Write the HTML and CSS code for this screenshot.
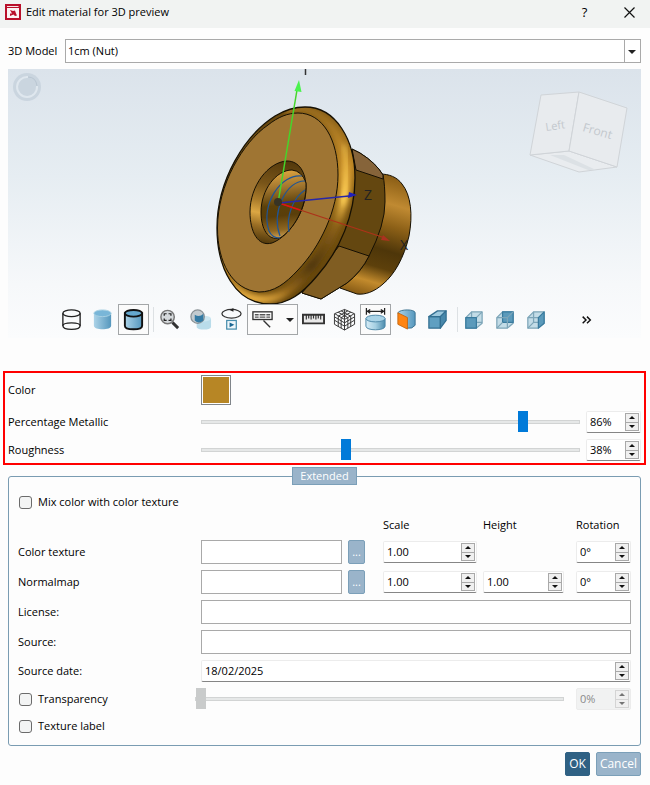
FILE: index.html
```html
<!DOCTYPE html>
<html lang="en">
<head>
<meta charset="utf-8">
<meta name="viewport" content="width=device-width, initial-scale=1">
<title>Edit material for 3D preview</title>
<link rel="stylesheet" href="styles.css">
</head>
<body>
<main class="dialog">
  <header class="titlebar">
    <svg class="app-icon" viewBox="0 0 16 16" aria-hidden="true">
      <rect width="16" height="16" fill="#b9102a"/>
      <path d="M2 2.500h11.500" stroke="#f6e4e4"/>
      <rect x="2" y="4" width="12" height="10" fill="#fbf3f3"/>
      <path d="M5 6l3 1 2-.5 1 3 1 2-2 .5-1.500-1.500L5 12V9.500h2z" fill="#b9102a"/>
    </svg>
    <h1 class="title">Edit material for 3D preview</h1>
    <button class="title-button" type="button" aria-label="Help">?</button>
    <button class="title-button" type="button" aria-label="Close">
      <svg width="11" height="11" viewBox="0 0 11 11"><path d="M.5.5l10 10M10.500.5l-10 10" stroke="#111" stroke-width="1.200"/></svg>
    </button>
  </header>

  <form class="content">
    <div class="model-row">
      <label for="model">3D Model</label>
      <div class="combo">
        <select id="model"><option>1cm (Nut)</option></select>
      </div>
    </div>

    <section class="viewport" aria-label="3D preview">
      <svg class="scene" viewBox="8 69 633 269" role="img" aria-label="Nut model">
        <defs>
          <linearGradient id="rim" gradientUnits="userSpaceOnUse" x1="217" y1="120" x2="355" y2="290">
            <stop offset="0" stop-color="#4d3405"/><stop offset=".35" stop-color="#8a6019"/><stop offset=".55" stop-color="#b98322"/><stop offset=".7" stop-color="#7c5612"/><stop offset="1" stop-color="#4d3405"/>
          </linearGradient>
          <linearGradient id="glow" gradientUnits="userSpaceOnUse" x1="320" y1="110" x2="262" y2="304">
            <stop offset="0" stop-color="#94681c"/><stop offset=".2" stop-color="#cf942c"/><stop offset=".38" stop-color="#fcc74e"/><stop offset=".52" stop-color="#8f6318"/><stop offset=".75" stop-color="#50370a"/><stop offset=".9" stop-color="#94661a"/><stop offset="1" stop-color="#f0b544"/>
          </linearGradient>
          <linearGradient id="barrel" gradientUnits="userSpaceOnUse" x1="396" y1="178" x2="362" y2="294">
            <stop offset="0" stop-color="#8b5e16"/><stop offset=".12" stop-color="#a87624"/><stop offset=".22" stop-color="#c08a32"/><stop offset=".4" stop-color="#8c6017"/><stop offset=".6" stop-color="#4e3609"/><stop offset=".75" stop-color="#5d400b"/><stop offset=".88" stop-color="#c38b2d"/><stop offset="1" stop-color="#8b5e16"/>
          </linearGradient>
          <linearGradient id="chamfer" gradientUnits="userSpaceOnUse" x1="282" y1="161" x2="266" y2="244">
            <stop offset="0" stop-color="#553a0c"/><stop offset=".3" stop-color="#795519"/><stop offset=".5" stop-color="#a87a2a"/><stop offset=".65" stop-color="#dca743"/><stop offset=".8" stop-color="#9a6e24"/><stop offset="1" stop-color="#4f370b"/>
          </linearGradient>
          <linearGradient id="bore" gradientUnits="userSpaceOnUse" x1="278" y1="170" x2="286" y2="240">
            <stop offset="0" stop-color="#e0a63f"/><stop offset=".25" stop-color="#a2762f"/><stop offset=".5" stop-color="#5b4009"/><stop offset=".65" stop-color="#5a3e0a"/><stop offset=".85" stop-color="#8f6722"/><stop offset="1" stop-color="#e2b465"/>
          </linearGradient>
          <filter id="soft" x="-20%" y="-20%" width="140%" height="140%"><feGaussianBlur stdDeviation="2.500"/></filter>
          <clipPath id="flange"><path d="M305 107C336 107 355 140 355 178C355 215 340 250 317 276C302 294 288 304 270 304C235 304 217 268 217 228C217 180 245 135 275 116C285 110 295 107 305 107Z"/></clipPath>
        </defs>

        <g class="badge">
          <circle cx="27" cy="87" r="14" fill="#cad5df"/>
          <path d="M28 77a10 10 0 1 0 9 9" fill="none" stroke="#dfe7ee" stroke-width="2"/>
          <path d="M28 77q8 0 9 9" fill="none" stroke="#b9c6d2"/>
        </g>

        <g stroke="#161003" stroke-linejoin="round">
          <path d="M380 174C389 174 397 177 402 184C411 195 413 215 409 236C404 258 394 275 383 284C374 292 365 295 357 294L340 288Z" fill="url(#barrel)"/>
          <path d="M352 149L360 153Q376 163 383 175Q385 185 385 202Q385 225 369 256Q361 272 347 283L321 299L302 293L320 180Z" fill="#644710"/>
          <path d="M352 149L360 153Q376 163 383 175V179L356 170Z" fill="#86643a"/>
          <path d="M339 246L369 256Q361 272 347 283L321 299L302 293Z" fill="#805d22"/>
        </g>
        <g clip-path="url(#flange)">
          <rect x="210" y="100" width="150" height="210" fill="url(#rim)"/>
          <path d="M285 110C318 101 346 130 346 176C346 214 328 248 305 274C287 295 273 300 258 299Q240 297 224 276" fill="none" stroke="url(#glow)" stroke-width="9" filter="url(#soft)"/>
          <path d="M344 145Q350 170 342 205" fill="none" stroke="#ffd85d" stroke-width="2" filter="url(#soft)"/>
        </g>
        <path d="M305 107C336 107 355 140 355 178C355 215 340 250 317 276C302 294 288 304 270 304C235 304 217 268 217 228C217 180 245 135 275 116C285 110 295 107 305 107Z" fill="none" stroke="#161003" stroke-width="1.300"/>
        <path d="M298 113C323 113 338 140 338 175C338 210 320 247 298 270C285 284 274 292 259 292C232 290 217.500 262 217.500 228C217.500 185 243 142 268 125C278 117 288 113 298 113Z" fill="#9f7533" stroke="#161003"/>
        <path d="M287 161C299 161 306 172 306 188C306 213 288 237 272 243C258 247 250 232 250 212C250 186 268 162 287 161Z" fill="url(#chamfer)" stroke="#161003"/>
        <path d="M292 170Q302 171 306 183C307 208 293 230 280 238C268 241 261 229 261 212C261 190 276 170 292 170Z" fill="url(#bore)" stroke="#161003"/>
        <g fill="none" stroke="#1f5596" stroke-width="1.200">
          <path d="M302 176C281 173 260 205 269 231Q272 238 280 238"/>
          <path d="M305 181C287 180 271 211 280 236"/>
          <path d="M305 190C293 198 286 216 289 232"/>
        </g>
        <path d="M278 203L297 90" stroke="#46d52b" stroke-width="1.500"/>
        <path d="M299 80l2.500 12-7-1z" fill="#4af34d"/>
        <path d="M279 203L385 238" stroke="#ad3219" stroke-width="1.300"/>
        <path d="M279 203L300 210" stroke="#e01313" stroke-width="1.500"/>
        <path d="M390 241l-9-1 2-5z" fill="#ab3220"/>
        <path d="M279 203L349 196" stroke="#2727a8" stroke-width="1.500"/>
        <path d="M357 195l-8-3-1 6z" fill="#2020bb"/>
        <circle cx="278" cy="202" r="4" fill="#373324"/>
        <path d="M305.500 69v6" stroke="#333" stroke-width="1.500"/>
        <text class="axis" x="364" y="200">Z</text>
        <text class="axis" x="400" y="250">X</text>

        <g stroke="#d0d4d8" stroke-linejoin="round">
          <path d="M530 155L569 151L617 167L579 172Z" fill="#e9ecef"/>
          <path d="M541 95L579 92L569 151L530 155Z" fill="#e8ebee"/>
          <path d="M579 92L627 108L617 167L569 151Z" fill="#e8ebee"/>
          <path d="M550 155l38 15h8l-32-15z" fill="#dce1e5" stroke="none"/>
        </g>
        <text class="cube-left" transform="translate(546 131) rotate(-8)">Left</text>
        <text class="cube-front" transform="translate(582 131) rotate(16)">Front</text>
      </svg>

      <div class="toolbar" role="toolbar" aria-label="View tools">
        <svg class="defs" width="0" height="0" aria-hidden="true">
          <defs>
            <linearGradient id="blue"><stop offset="0" stop-color="#acd3e8"/><stop offset="1" stop-color="#5597bd"/></linearGradient>
            <linearGradient id="pale"><stop offset="0" stop-color="#d7edf7"/><stop offset=".5" stop-color="#a5cfe2"/><stop offset="1" stop-color="#4c8cad"/></linearGradient>
          </defs>
        </svg>
        <button class="tool" type="button" aria-label="Wireframe"><svg viewBox="0 0 24 24"><g fill="none" stroke="#222" stroke-width="1.400"><ellipse cx="12" cy="5.500" rx="9" ry="3.500"/><path d="M3 5.500v13c0 5 18 5 18 0v-13"/><path d="M3 18.500c0-4 18-4 18 0"/></g></svg></button>
        <button class="tool" type="button" aria-label="Shaded"><svg viewBox="0 0 24 24"><path d="M3 5.500v13c0 5 18 5 18 0v-13z" fill="url(#blue)"/><ellipse cx="12" cy="5.500" rx="9" ry="3.500" fill="#79b6d8" stroke="#a9d1e3"/></svg></button>
        <button class="tool active" type="button" aria-label="Shaded with edges"><svg viewBox="0 0 24 24"><path d="M3 5.500v13c0 5 18 5 18 0v-13z" fill="url(#blue)" stroke="#111" stroke-width="2"/><ellipse cx="12" cy="5.500" rx="9" ry="3.500" fill="#65a8ce" stroke="#111" stroke-width="2"/></svg></button>
        <span class="divider"></span>
        <button class="tool" type="button" aria-label="Zoom to fit"><svg viewBox="0 0 24 24"><path d="M15 15l6 6" stroke="#333" stroke-width="3"/><circle cx="10" cy="9.500" r="7" fill="#d5d9dc" stroke="#777" stroke-width="1.500"/><path d="M6.500 8V6H9M11 6h2.500v2M13.500 11v2H11M9 13H6.500v-2" fill="none" stroke="#222" stroke-width="1.300"/></svg></button>
        <button class="tool" type="button" aria-label="Transparent view"><svg viewBox="0 0 24 24"><path d="M8 11v8.500c0 4 15 4 15 0V11z" fill="#b9dcea"/><ellipse cx="15.500" cy="11" rx="7.500" ry="3" fill="#cde7f1"/><circle cx="9" cy="9" r="7" fill="#c3cbcf" stroke="#8a9296" stroke-width="1.300"/><path d="M6 7q5 3 9-1v7q-5 4-9 0z" fill="#347ba4"/></svg></button>
        <button class="tool" type="button" aria-label="Rotate animation"><svg viewBox="0 0 24 24"><ellipse cx="12" cy="6" rx="10" ry="4.500" fill="none" stroke="#333" stroke-width="1.300"/><path d="M14 0l-4 2 4 2" fill="#222"/><rect x="7" y="13" width="10" height="9" fill="#eef6fa" stroke="#488ead" stroke-width="1.300"/><path d="M10 15l5 2.500-5 2.500z" fill="#1b6793"/></svg></button>
        <button class="tool split active" type="button" aria-label="Labels"><svg viewBox="0 0 24 24"><rect x="2" y="4" width="20" height="8" fill="#fff" stroke="#333" stroke-width="1.400"/><path d="M4 7h4M9 7h6M16 7h4M4 9.500h4M9 9.500h6M16 9.500h4" stroke="#555" stroke-width="1.500"/><path d="M13 13l7 7" stroke="#333" stroke-width="1.400"/></svg><span class="caret"></span></button>
        <button class="tool" type="button" aria-label="Measure"><svg viewBox="0 0 24 24"><path d="M1 7h22v9H1z" fill="#e8e8e8" stroke="#333" stroke-width="2"/><path d="M4.500 7v5M7 7v4M9.500 7v5M12 7v4M14.500 7v5M17 7v4M19.500 7v5" stroke="#333" stroke-width="1.200"/></svg></button>
        <button class="tool" type="button" aria-label="Mesh"><svg viewBox="0 0 24 24"><g fill="none" stroke="#333"><path d="M12 1.500L22.500 6v11L12 23 1.500 17V6z"/><path d="M2 6l10 6 10-6M12 12v11M5.500 4.500l10 5.500v11M8.500 3l10 5.500v11M18.500 4.500l-10 5.500v11M15.500 3l-10 5.500v11M2 9.500l10 6 10-6M2 13l10 6 10-6M12 1.500v10"/></g></svg></button>
        <button class="tool active" type="button" aria-label="Dimensions"><svg viewBox="0 0 24 24"><path d="M2.500 0v7M21.500 0v7M3 3.500h18M6.500 1.500l-3 2 3 2M17.500 1.500l3 2-3 2" fill="none" stroke="#222" stroke-width="1.300"/><path d="M2 11v8c0 5 20 5 20 0v-8z" fill="url(#pale)" stroke="#4c87a7"/><ellipse cx="12" cy="11" rx="10" ry="3.500" fill="#a9d3e7" stroke="#4c87a7"/></svg></button>
        <button class="tool" type="button" aria-label="Section view"><svg viewBox="0 0 24 24"><path d="M3 5c2-4 18-4 18 0v13q-3 4-8 3z" fill="url(#blue)" stroke="#39718f"/><path d="M3 5l10 5v12L3 17z" fill="#ff8411" stroke="#c66a15"/></svg></button>
        <button class="tool" type="button" aria-label="Isometric view"><svg viewBox="0 0 24 24"><g stroke="#326f91" stroke-width="1.300" stroke-linejoin="round"><path d="M3 9h12v12H3z" fill="#5f9fc1"/><path d="M3 9l9-6h9l-6 6z" fill="#9dc9de"/><path d="M15 9l6-6v10l-6 8z" fill="#4888ab"/></g></svg></button>
        <span class="divider"></span>
        <button class="tool" type="button" aria-label="Front view"><svg viewBox="0 0 24 24"><g stroke="#7da5b8" stroke-width="1.300" stroke-linejoin="round"><path d="M4 10l6-6h11v12l-6 5H4z" fill="#c3dce7"/><path d="M10 4v11h11M10 15l-6 6M15 10l6-6" fill="none"/><path d="M4 10h11v11H4z" fill="#5b9abb" stroke="#397b9e"/></g></svg></button>
        <button class="tool" type="button" aria-label="Back view"><svg viewBox="0 0 24 24"><g stroke="#7da5b8" stroke-width="1.300" stroke-linejoin="round"><path d="M4 10l6-6h11v12l-6 5H4z" fill="#c3dce7"/><path d="M10 4h11v11H10z" fill="#5b9abb" stroke="#397b9e"/><path d="M4 10h11v11M4 21l6-6M15 10l6-6" fill="none"/></g></svg></button>
        <button class="tool" type="button" aria-label="Right view"><svg viewBox="0 0 24 24"><g stroke="#7da5b8" stroke-width="1.300" stroke-linejoin="round"><path d="M4 10l6-6h11v12l-6 5H4z" fill="#c3dce7"/><path d="M4 10h11M10 4v11h11M10 15l-6 6" fill="none"/><path d="M15 10l6-6v12l-6 5z" fill="#5b9abb" stroke="#397b9e"/></g></svg></button>
        <button class="tool more" type="button" aria-label="More tools"><svg viewBox="0 0 24 24"><path d="M8 9l3.500 3.500L8 16M12.500 9l3.500 3.500-3.500 3.500" fill="none" stroke="#111" stroke-width="1.500"/></svg></button>
      </div>
    </section>

    <section class="surface" aria-label="Surface">
      <label for="color">Color</label>
      <button class="swatch" id="color" type="button" aria-label="Choose color"></button>

      <label class="row-start" for="metallic">Percentage Metallic</label>
      <input class="slider" id="metallic" type="range" min="0" max="100" value="86">
      <div class="spin"><input type="text" value="86%" aria-label="Metallic value"><span class="steps"><button type="button" aria-label="Increase"></button><button type="button" aria-label="Decrease"></button></span></div>

      <label class="row-start" for="roughness">Roughness</label>
      <input class="slider" id="roughness" type="range" min="0" max="100" value="38">
      <div class="spin"><input type="text" value="38%" aria-label="Roughness value"><span class="steps"><button type="button" aria-label="Increase"></button><button type="button" aria-label="Decrease"></button></span></div>
    </section>

    <fieldset class="extended">
      <legend><button class="extended-toggle" type="button">Extended</button></legend>
      <label class="check"><input type="checkbox">Mix color with color texture</label>

      <div class="maps">
        <span class="head head-scale">Scale</span>
        <span class="head head-height">Height</span>
        <span class="head head-rotation">Rotation</span>

        <label class="row-start" for="texture">Color texture</label>
        <input class="field" id="texture" type="text">
        <button class="browse" type="button" aria-label="Browse color texture">...</button>
        <div class="spin scale"><input type="text" value="1.00" aria-label="Texture scale"><span class="steps"><button type="button" aria-label="Increase"></button><button type="button" aria-label="Decrease"></button></span></div>
        <div class="spin rotation"><input type="text" value="0°" aria-label="Texture rotation"><span class="steps"><button type="button" aria-label="Increase"></button><button type="button" aria-label="Decrease"></button></span></div>

        <label class="row-start" for="normal">Normalmap</label>
        <input class="field" id="normal" type="text">
        <button class="browse" type="button" aria-label="Browse normalmap">...</button>
        <div class="spin scale"><input type="text" value="1.00" aria-label="Normalmap scale"><span class="steps"><button type="button" aria-label="Increase"></button><button type="button" aria-label="Decrease"></button></span></div>
        <div class="spin"><input type="text" value="1.00" aria-label="Normalmap height"><span class="steps"><button type="button" aria-label="Increase"></button><button type="button" aria-label="Decrease"></button></span></div>
        <div class="spin rotation"><input type="text" value="0°" aria-label="Normalmap rotation"><span class="steps"><button type="button" aria-label="Increase"></button><button type="button" aria-label="Decrease"></button></span></div>

        <label class="row-start" for="license">License:</label>
        <input class="field wide" id="license" type="text">

        <label class="row-start" for="source">Source:</label>
        <input class="field wide" id="source" type="text">

        <label class="row-start" for="date">Source date:</label>
        <div class="spin wide"><input id="date" type="text" value="18/02/2025"><span class="steps"><button type="button" aria-label="Later"></button><button type="button" aria-label="Earlier"></button></span></div>
      </div>

      <div class="transparency">
        <label class="check"><input type="checkbox">Transparency</label>
        <input class="slider" type="range" min="0" max="100" value="0" aria-label="Transparency amount" disabled>
        <div class="spin disabled"><input type="text" value="0%" aria-label="Transparency value" disabled><span class="steps"><button type="button" aria-label="Increase" disabled></button><button type="button" aria-label="Decrease" disabled></button></span></div>
      </div>
      <label class="check"><input type="checkbox">Texture label</label>
    </fieldset>

    <footer class="actions">
      <button class="action primary" type="button">OK</button>
      <button class="action" type="button">Cancel</button>
    </footer>
  </form>
</main>
</body>
</html>
```
FILE: styles.css
```css
* { box-sizing: border-box; }

body {
  margin: 0;
  background: #fdfdfd;
  color: #000;
  font: 11px/16px "Open Sans", "Noto Sans", sans-serif;
}

button, input, select {
  margin: 0;
  padding: 0;
  border: 0;
  border-radius: 0;
  background: none;
  color: inherit;
  font: inherit;
}

/* Title bar */
.titlebar {
  display: flex;
  align-items: center;
  height: 28px;
  padding: 0 5px 4px;
  background: #f1f3f2;
}
.app-icon { width: 16px; height: 16px; }
.title {
  flex: 1;
  margin: 0 0 0 5px;
  font-size: 11px;
  font-weight: 400;
}
.title-button {
  display: grid;
  place-items: center;
  width: 31px;
  height: 24px;
  font-size: 13px;
}
.title-button + .title-button { margin-left: 14px; }

.content { padding: 11px 9px 9px 8px; }

/* Model selector */
.model-row {
  display: flex;
  align-items: center;
  gap: 6px;
}
.model-row label { flex: 0 0 51px; white-space: nowrap; }
.combo {
  position: relative;
  flex: 1;
  height: 24px;
  border: 1px solid #a9a9a9;
  background: #fff;
}
.combo select {
  width: 100%;
  height: 100%;
  padding: 0 20px 0 2px;
  appearance: none;
}
.combo::before {
  content: "";
  position: absolute;
  top: 0;
  right: 15px;
  bottom: 0;
  border-left: 1px solid #a9a9a9;
}
.combo::after, .caret {
  width: 0;
  border: 4px solid transparent;
  border-top-color: #222;
  border-bottom: 0;
}
.combo::after {
  content: "";
  position: absolute;
  top: 10px;
  right: 4px;
  pointer-events: none;
}

/* 3D preview */
.viewport {
  position: relative;
  margin-top: 6px;
  background: linear-gradient(#dbe3eb, #e6edf2 40%, #f6f8fa 80%, #fbfcfd);
}
.scene { display: block; width: 100%; height: 269px; }
.axis { fill: #222; font-size: 14px; }
.cube-left, .cube-front { fill: #c3c8cd; }
.cube-left { font-size: 11px; }
.cube-front { font-size: 12px; }

.toolbar {
  position: absolute;
  right: 0;
  bottom: 3px;
  left: 0;
  display: flex;
  align-items: center;
  padding: 0 39px 0 48px;
}
.defs { position: absolute; }
.tool {
  display: flex;
  align-items: center;
  justify-content: center;
  flex: 0 0 31px;
  height: 31px;
  border: 1px solid transparent;
}
.tool svg { width: 23px; height: 23px; }
.tool.active { border-color: #a3a6a8; background: #fbfbfb; }
.tool.split { flex-basis: 51px; gap: 12px; }
.more { margin-left: auto; }
.divider {
  flex: 0 0 5px;
  height: 25px;
  border-right: 1px solid #dde1e4;
}

/* Highlighted surface settings */
.surface {
  display: grid;
  grid-template-columns: 187px minmax(0, 1fr) 55px;
  grid-template-rows: 30px 22px 22px;
  gap: 6px;
  align-items: center;
  margin: 33px -5px 0;
  padding: 2px 3px;
  border: 2px solid #f00;
}
.row-start { grid-column: 1; }
.swatch {
  width: 30px;
  height: 30px;
  border: 1px solid #80858a;
  background: #b78625;
  box-shadow: inset 0 0 0 1px #fff;
}

.slider {
  width: 100%;
  min-width: 0;
  height: 21px;
  appearance: none;
}
.slider::-webkit-slider-runnable-track {
  height: 4px;
  border: 1px solid #d2d4d4;
  background: #e6e8e8;
}
.slider::-webkit-slider-thumb {
  width: 10px;
  height: 21px;
  margin-top: -10px;
  appearance: none;
  background: #007ad9;
}
.slider:disabled::-webkit-slider-thumb { background: #c9cbcb; }

.spin {
  display: flex;
  height: 22px;
  padding: 1px 1px 1px 3px;
  border: 1px solid #ececec;
  border-bottom-color: #858585;
  border-radius: 2px;
  background: #fff;
}
.spin input { flex: 1; width: 0; }
.steps {
  display: flex;
  flex-direction: column;
  flex: 0 0 14px;
  border: 1px solid #a9a9a9;
  background: #f0f0f0;
}
.steps button {
  display: grid;
  place-items: center;
  flex: 1;
}
.steps button + button { border-top: 1px solid #a9a9a9; }
.steps button::before {
  content: "";
  border: 3px solid transparent;
  border-top-width: 0;
  border-bottom-color: #111;
}
.steps button + button::before {
  border-width: 3px 3px 0;
  border-top-color: #111;
}
.spin.disabled {
  border-bottom-color: #ececec;
  background: #f1f2f2;
  color: #8a8a8a;
}
.disabled .steps, .disabled .steps button { border-color: #d4d4d4; }
.disabled .steps button::before { opacity: .55; }

/* Extended settings */
.extended {
  min-width: 0;
  margin: 2px 0 0;
  padding: 7px 9px 9px;
  border: 1px solid #7a9cb2;
  border-radius: 3px;
}
.extended legend { margin: 0 auto; padding: 0; }
.extended-toggle {
  display: block;
  height: 18px;
  padding: 0 7px;
  border: 1px solid #7b9fb8;
  background: #9ab4ca;
  color: #fff;
}
.check {
  display: flex;
  align-items: center;
  gap: 6px;
  height: 20px;
}
.check input {
  width: 13px;
  height: 13px;
  margin-left: 1px;
  border: 1px solid #6b6b6b;
  border-radius: 3px;
  background: #f3f4f4;
  appearance: none;
}
.maps {
  display: grid;
  grid-template-columns: 177px minmax(0, 1fr) 17px 106px 81px 61px;
  grid-template-rows: 18px 24px 24px 24px 24px 22px;
  gap: 6px;
  align-items: center;
  margin-top: 4px;
}
.head-scale { grid-column: 4; padding-left: 12px; }
.head-height { grid-column: 5; }
.head-rotation { grid-column: 6; padding-left: 6px; }
.field {
  width: 100%;
  height: 24px;
  padding: 0 3px;
  border: 1px solid #a9a9a9;
  background: #fff;
}
.scale { grid-column: 4; margin-left: 12px; }
.rotation { grid-column: 6; margin-left: 6px; }
.wide { grid-column: 2 / -1; }
.browse, .action {
  height: 24px;
  border: 1px solid #7b9fb8;
  border-radius: 2px;
  background: #9ab4ca;
  color: #fff;
}
.transparency {
  display: flex;
  align-items: center;
  margin: 6px 0;
}
.transparency .check { flex: 0 0 177px; }
.transparency .slider { flex: 1; }
.transparency .spin { flex: 0 0 55px; margin-left: 12px; }

/* Dialog actions */
.actions {
  display: flex;
  justify-content: flex-end;
  gap: 6px;
  margin-top: 6px;
}
.action { padding: 0 3px; font-size: 12px; }
.action.primary { border-color: #2f6184; background: #2f6184; }
```
